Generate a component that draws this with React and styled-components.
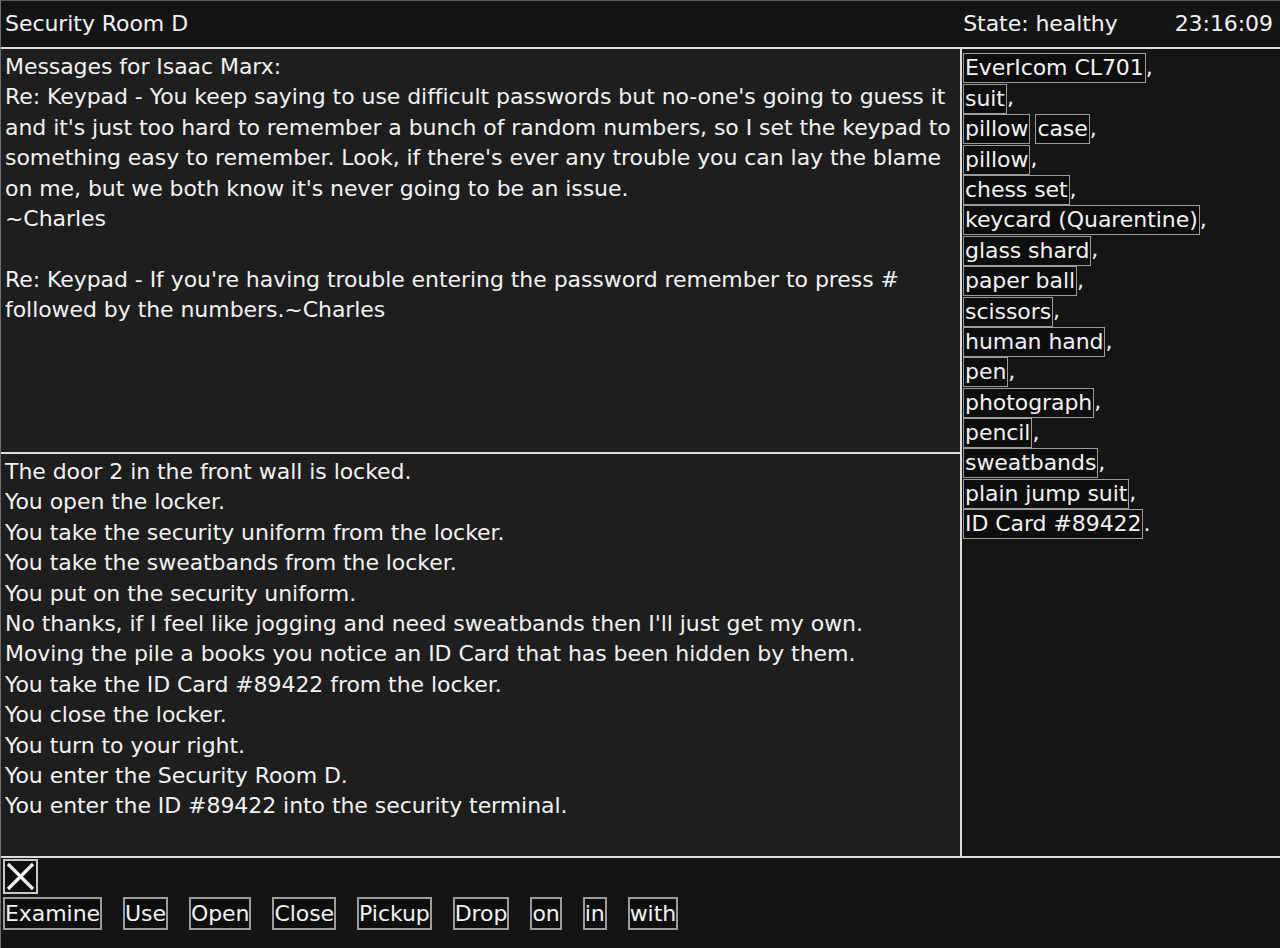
import React from 'react'
import styled, { createGlobalStyle } from 'styled-components'

const colors = {
  bar: '#141414',
  pane: '#1e1e1e',
  side: '#151515',
  rule: '#dcdcdc',
  box: '#9c9c9c',
  boxBg: '#0e0e0e',
  text: '#f2f2f2',
}

const GlobalStyle = createGlobalStyle`
  html, body {
    margin: 0;
    padding: 0;
    background: ${colors.bar};
  }
  body {
    font-family: "DejaVu Sans", Verdana, sans-serif;
    font-size: 22px;
    letter-spacing: -0.06px;
    color: ${colors.text};
  }
`

const messages = [
  'Re: Keypad - You keep saying to use difficult passwords but no-one\'s going to guess it and it\'s just too hard to remember a bunch of random numbers, so I set the keypad to something easy to remember. Look, if there\'s ever any trouble you can lay the blame on me, but we both know it\'s never going to be an issue.\n~Charles',
  'Re: Keypad - If you\'re having trouble entering the password remember to press # followed by the numbers.~Charles',
]

const log = [
  'The door 2 in the front wall is locked.',
  'You open the locker.',
  'You take the security uniform from the locker.',
  'You take the sweatbands from the locker.',
  'You put on the security uniform.',
  'No thanks, if I feel like jogging and need sweatbands then I\'ll just get my own.',
  'Moving the pile a books you notice an ID Card that has been hidden by them.',
  'You take the ID Card #89422 from the locker.',
  'You close the locker.',
  'You turn to your right.',
  'You enter the Security Room D.',
  'You enter the ID #89422 into the security terminal.',
]

// each row is one line of the inventory; some lines hold more than one box
const inventory = [
  ['EverIcom CL701'],
  ['suit'],
  ['pillow', 'case'],
  ['pillow'],
  ['chess set'],
  ['keycard (Quarentine)'],
  ['glass shard'],
  ['paper ball'],
  ['scissors'],
  ['human hand'],
  ['pen'],
  ['photograph'],
  ['pencil'],
  ['sweatbands'],
  ['plain jump suit'],
  ['ID Card #89422'],
]

const verbs = ['Examine', 'Use', 'Open', 'Close', 'Pickup', 'Drop', 'on', 'in', 'with']

const Terminal = () => {
  return (
    <>
      <GlobalStyle />
      <Frame>
        <TopBar>
          <RoomName>Security Room D</RoomName>
          <Status>
            <span>State: healthy</span>
            <span>23:16:09</span>
          </Status>
        </TopBar>
        <Main>
          <LeftColumn>
            <MessagesPane>
              <Line>Messages for Isaac Marx:</Line>
              {messages.map((msg, i) => (
                <Message key={i}>{msg}</Message>
              ))}
            </MessagesPane>
            <LogPane>
              {log.map((line, i) => (
                <Line key={i}>{line}</Line>
              ))}
            </LogPane>
          </LeftColumn>
          <SidePane>
            {inventory.map((row, i) => (
              <ItemRow key={i}>
                {row.map((name, j) => (
                  <Item key={j}>{name}</Item>
                ))}
                {i === inventory.length - 1 ? '.' : ','}
              </ItemRow>
            ))}
          </SidePane>
        </Main>
        <BottomBar>
          <CloseButton aria-label="close">
            <svg width="31" height="31" viewBox="0 0 31 31">
              <path d="M3 3 L28 28 M28 3 L3 28" stroke="#f4f4f4" strokeWidth="3.2" fill="none" />
            </svg>
          </CloseButton>
          <Verbs>
            {verbs.map(v => (
              <Verb key={v}>{v}</Verb>
            ))}
          </Verbs>
        </BottomBar>
      </Frame>
    </>
  )
}

const Frame = styled.div`
  width: 1280px;
  height: 948px;
  box-sizing: border-box;
  display: flex;
  flex-direction: column;
  border-left: 1px solid #6e6e6e;
  border-top: 1px solid #5a5a5a;
  overflow: hidden;
`

const TopBar = styled.header`
  height: 46px;
  flex-shrink: 0;
  display: flex;
  align-items: center;
  justify-content: space-between;
  padding: 0 7px 0 4px;
  background: ${colors.bar};
  border-bottom: 2px solid ${colors.rule};
`

const RoomName = styled.div`
  line-height: 1;
`

const Status = styled.div`
  display: flex;
  gap: 57px;
  line-height: 1;
`

const Main = styled.div`
  display: flex;
  height: 807px;
  flex-shrink: 0;
  border-bottom: 2px solid ${colors.rule};
`

const LeftColumn = styled.div`
  width: 959px;
  flex-shrink: 0;
  display: flex;
  flex-direction: column;
  background: ${colors.pane};
`

const MessagesPane = styled.section`
  height: 400px;
  flex-shrink: 0;
  padding: 3px 4px 0;
  border-bottom: 2px solid ${colors.rule};
  line-height: 30.4px;
`

const Message = styled.p`
  margin: 0 0 30.4px;
  white-space: pre-line;
`

const LogPane = styled.section`
  flex: 1;
  padding: 3px 4px 0;
  line-height: 30.4px;
`

const Line = styled.div`
  white-space: nowrap;
`

const SidePane = styled.aside`
  flex: 1;
  background: ${colors.side};
  border-left: 2px solid ${colors.rule};
  padding: 4px 0 0 1px;
  line-height: 30.4px;
`

const ItemRow = styled.div`
  display: flex;
  align-items: flex-end;
  height: 30.4px;
`

const Item = styled.span`
  display: inline-block;
  background: ${colors.boxBg};
  border: 1px solid ${colors.box};
  padding: 0 1px;
  line-height: 28px;
  height: 28px;
  & + & {
    margin-left: 5px;
  }
`

const BottomBar = styled.footer`
  flex: 1;
  background: ${colors.bar};
  padding: 1px 2px 0;
  display: flex;
  flex-direction: column;
  gap: 3px;
`

const CloseButton = styled.button`
  width: 35px;
  height: 35px;
  box-sizing: border-box;
  padding: 0;
  display: flex;
  align-items: center;
  justify-content: center;
  background: ${colors.boxBg};
  border: 2px solid #c8c8c8;
  cursor: pointer;
`

const Verbs = styled.div`
  display: flex;
  gap: 21px;
`

const Verb = styled.button`
  font: inherit;
  letter-spacing: -0.06px;
  color: ${colors.text};
  background: ${colors.boxBg};
  border: 2px solid ${colors.box};
  height: 33px;
  padding: 0;
  line-height: 29px;
  cursor: pointer;
`

export default Terminal
